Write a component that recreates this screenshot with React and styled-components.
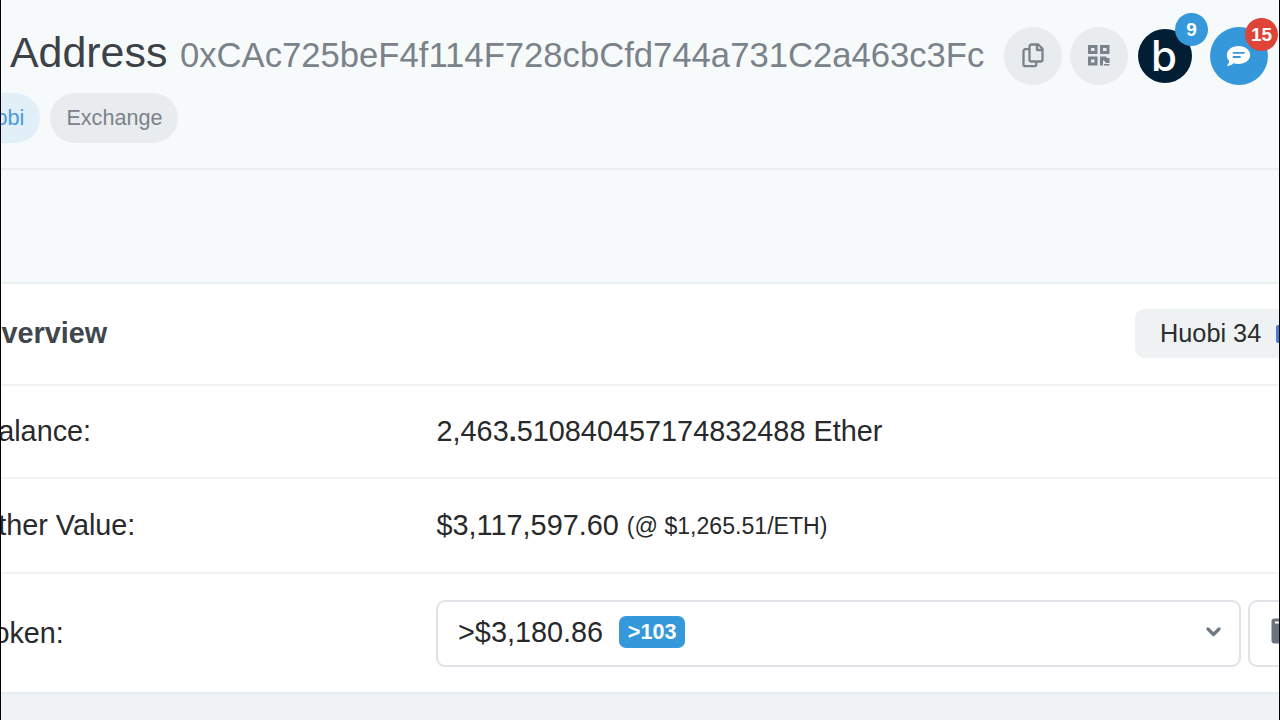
import React from "react";
import styled, { createGlobalStyle } from "styled-components";

const GlobalStyle = createGlobalStyle`
  * {
    box-sizing: border-box;
  }
  body {
    margin: 0;
    font-family: "Liberation Sans", Arial, sans-serif;
  }
`;

const Page = styled.div`
  width: 1280px;
  height: 720px;
  overflow: hidden;
  display: flex;
  flex-direction: column;
  background-color: #eff3f5;
  border-left: 1px solid #000;
  border-right: 1px solid #000;
  white-space: nowrap;
`;

const Header = styled.header`
  height: 170px;
  flex-shrink: 0;
  background-color: #f7fafb;
  border-bottom: 2px solid #ebeef0;
`;

const TitleRow = styled.div`
  display: flex;
  height: 93px;
  padding-left: 9px;
`;

const Title = styled.h1`
  margin: 0;
  width: 170px;
  font-size: 42.9px;
  font-weight: 400;
  line-height: 104px;
  color: #3c4248;
`;

const Hash = styled.span`
  width: 824px;
  font-size: 34.65px;
  line-height: 110px;
  color: #7b828a;
`;

const Actions = styled.div`
  display: flex;
  gap: 8px;
  padding-top: 27px;
`;

const RoundButton = styled.div`
  position: relative;
  width: 58px;
  height: 58px;
  border-radius: 50%;
  display: flex;
  align-items: center;
  justify-content: center;
  background-color: ${(props) => props.$bg || "#e9ecee"};
`;

const BlockscanLogo = styled(RoundButton)`
  width: 54px;
  height: 54px;
  margin: 2px 10px 0 2px;
  background-color: #021e34;
`;

const Count = styled.span`
  position: absolute;
  top: ${(props) => props.$top}px;
  left: ${(props) => props.$left}px;
  width: 33px;
  height: 33px;
  border-radius: 50%;
  background-color: ${(props) => props.$bg};
  color: #fff;
  font-size: 19px;
  font-weight: 700;
  line-height: 33px;
  text-align: center;
`;

const Tags = styled.div`
  display: flex;
  gap: 10px;
  margin-left: -49px;
`;

const Tag = styled.span`
  height: 50px;
  padding: 0 16px;
  border-radius: 25px;
  font-size: 21.6px;
  line-height: 50px;
  background-color: ${(props) => (props.$blue ? "#e1eff8" : "#e9ecee")};
  color: ${(props) => (props.$blue ? "#4a9bd8" : "#7b828a")};
`;

const Spacer = styled.div`
  height: 112px;
  flex-shrink: 0;
  background-color: #f7fafb;
`;

const Card = styled.section`
  height: 412px;
  flex-shrink: 0;
  background-color: #fff;
  border-top: 2px solid #ecf0f2;
  border-bottom: 2px solid #e8ebf0;
`;

const CardHeader = styled.div`
  display: flex;
  justify-content: space-between;
  height: 102px;
  margin-left: -22px;
  border-bottom: 2px solid #f0f1f3;
`;

const CardTitle = styled.h2`
  margin: 0;
  font-size: 28.8px;
  line-height: 98px;
  color: #3f474d;
`;

const NameTag = styled.div`
  display: flex;
  align-items: center;
  gap: 15px;
  width: 144px;
  height: 49px;
  margin-top: 25px;
  padding-left: 25px;
  border-radius: 9px 0 0 9px;
  overflow: hidden;
  background-color: #eff2f3;
  color: #2b2d2f;
  font-size: 25.3px;
`;

const TagLink = styled.span`
  flex-shrink: 0;
  width: 20px;
  height: 18px;
  border-radius: 2px;
  background-color: #4a7fd0;
`;

const Row = styled.div`
  display: flex;
  align-items: center;
  height: ${(props) => props.$height}px;
  margin-left: -22px;
  border-bottom: ${(props) => (props.$last ? "none" : "2px solid #f0f1f3")};
  font-size: 28.85px;
  color: #28292b;
`;

const Label = styled.div`
  width: 457.5px;
  flex-shrink: 0;
  font-size: 28.8px;
`;

const Rate = styled.span`
  font-size: 23.1px;
  position: relative;
  top: -1px;
`;

const TokenSelect = styled.div`
  display: flex;
  align-items: center;
  width: 805px;
  height: 67px;
  flex-shrink: 0;
  margin-left: -0.5px;
  padding: 0 18px 2px 20px;
  border: 2px solid #dfe2e6;
  border-radius: 9px;
`;

const TokenCount = styled.span`
  width: 66px;
  height: 32px;
  margin-left: 16px;
  margin-right: auto;
  border-radius: 7px;
  background-color: #3498db;
  color: #fff;
  font-size: 21.6px;
  font-weight: 700;
  line-height: 32px;
  text-align: center;
`;

const WalletButton = styled.div`
  display: flex;
  align-items: center;
  width: 67px;
  height: 67px;
  flex-shrink: 0;
  margin-left: 7px;
  padding: 0 0 4px 21px;
  border: 2px solid #dfe2e6;
  border-radius: 9px;
`;

const Icon = styled.svg`
  margin: ${(props) => props.$margin};
`;

function CopyIcon() {
  return (
    <Icon $margin="0 1px 1px 0" width="22" height="25" viewBox="0 0 22 25" fill="none" stroke="#7a828b" strokeWidth="2.3" strokeLinejoin="round">
      <path d="M7.500 3.500a2 2 0 0 1 2-2h6.800L20.500 5.700v10.800a2 2 0 0 1-2 2h-9a2 2 0 0 1-2-2z" />
      <path d="M15 1.800V7h5" />
      <path d="M7.500 6.200h-4a2 2 0 0 0-2 2v13a2 2 0 0 0 2 2h8.800a2 2 0 0 0 2-2V18.500" />
    </Icon>
  );
}

function QrIcon() {
  return (
    <Icon $margin="0 0 1px 0" width="22" height="21" viewBox="0 0 22 21" fill="#7a828b">
      <path fillRule="evenodd" d="M0 0h9.500v9H0zM3 3v3h3.500V3zM12 0h9.500v9H12zM15 3v3h3.500V3zM0 11.500h9.500v9H0zM3 14.500v3h3.500v-3z" />
      <path d="M12 11.500h6l1 1.500h2.500v5h-3.500l-2-2.500h-1v5H12zM16 19h5.500v1.500H16z" />
    </Icon>
  );
}

function ChatIcon() {
  return (
    <Icon $margin="0 2px 1px 0" width="25" height="22" viewBox="0 0 25 22">
      <path fill="#fff" d="M12.500 1C19 1 24.200 4.900 24.200 10S19 19 12.500 19c-1.800 0-3.400-.3-4.900-.8C5.800 19.900 3.300 21 .8 21c1.500-1.500 2.200-3.200 2.300-4.900C1.600 14.500.8 12.300.8 10 .8 4.900 6 1 12.500 1z" />
      <path stroke="#3498db" strokeWidth="1.800" strokeLinecap="round" d="M7.500 7.800h10.500M7.500 12h6.500" />
    </Icon>
  );
}

function BIcon() {
  return (
    <svg width="54" height="54" viewBox="0 0 54 54">
      <text x="13" y="42" fill="#fff" fontFamily="Inter, sans-serif" fontWeight="500" fontSize="42">
        b
      </text>
    </svg>
  );
}

function ChevronIcon() {
  return (
    <svg width="15" height="10" viewBox="0 0 15 10" fill="none" stroke="#717985" strokeWidth="3.200" strokeLinecap="round" strokeLinejoin="round">
      <path d="M2 2l5.500 5.500L13 2" />
    </svg>
  );
}

function WalletIcon() {
  return (
    <svg width="28" height="26" viewBox="0 0 28 26">
      <rect x="0.500" y="0.500" width="27" height="25" rx="3" fill="#6b737d" />
      <path stroke="#fff" strokeWidth="2" d="M4 4.500h24" />
    </svg>
  );
}

export default function App() {
  return (
    <>
      <GlobalStyle />
      <Page>
        <Header>
          <TitleRow>
            <Title>Address</Title>
            <Hash>0xCAc725beF4f114F728cbCfd744a731C2a463c3Fc</Hash>
            <Actions>
              <RoundButton>
                <CopyIcon />
              </RoundButton>
              <RoundButton>
                <QrIcon />
              </RoundButton>
              <BlockscanLogo>
                <BIcon />
                <Count $bg="#3498db" $top={-16} $left={37}>
                  9
                </Count>
              </BlockscanLogo>
              <RoundButton $bg="#3498db">
                <ChatIcon />
                <Count $bg="#de4437" $top={-9} $left={35}>
                  15
                </Count>
              </RoundButton>
            </Actions>
          </TitleRow>
          <Tags>
            <Tag $blue>Huobi</Tag>
            <Tag>Exchange</Tag>
          </Tags>
        </Header>
        <Spacer />
        <Card>
          <CardHeader>
            <CardTitle>Overview</CardTitle>
            <NameTag>
              Huobi 34
              <TagLink />
            </NameTag>
          </CardHeader>
          <Row $height={93}>
            <Label>Balance:</Label>
            <span>
              2,463<b>.</b>510840457174832488 Ether
            </span>
          </Row>
          <Row $height={95}>
            <Label>Ether Value:</Label>
            <span>
              $3,117,597.60 <Rate>(@ $1,265.51/ETH)</Rate>
            </span>
          </Row>
          <Row $height={118} $last>
            <Label>Token:</Label>
            <TokenSelect>
              &gt;$3,180.86
              <TokenCount>&gt;103</TokenCount>
              <ChevronIcon />
            </TokenSelect>
            <WalletButton>
              <WalletIcon />
            </WalletButton>
          </Row>
        </Card>
      </Page>
    </>
  );
}
